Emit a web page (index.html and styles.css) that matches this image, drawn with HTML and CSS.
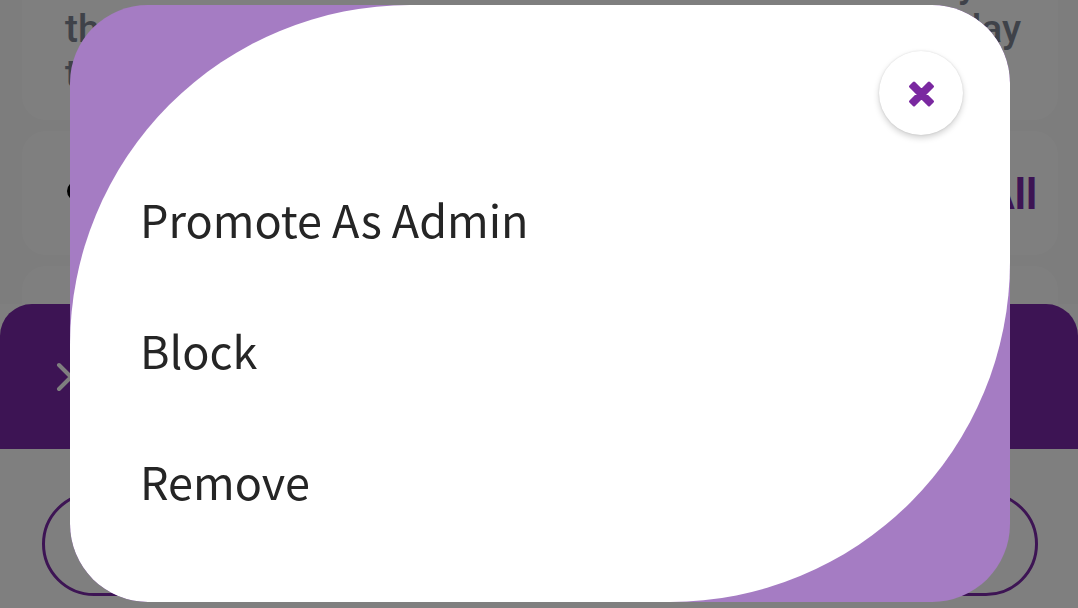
FILE: index.html
```html
<!DOCTYPE html>
<html lang="en">
<head>
<meta charset="utf-8">
<meta name="viewport" content="width=device-width, initial-scale=1">
<title>Member options</title>
<link rel="stylesheet" href="styles.css">
</head>
<body>
<main class="page">
  <div class="cards">
    <section class="card message">
      <p class="line line-short"><span></span><span>y</span></p>
      <p class="line"><span>th</span><span>day</span></p>
      <p class="line"><span>t</span></p>
    </section>
    <section class="card toolbar">
      <svg class="dot" viewBox="0 0 20 20" aria-hidden="true"><circle cx="10" cy="6" r="10"/></svg>
      <a class="all" href="#">All</a>
    </section>
    <section class="card next"></section>
  </div>
  <section class="sheet">
    <header class="sheet-bar">
      <button class="sheet-close" type="button" aria-label="Close sheet">
        <svg viewBox="0 0 30 30" aria-hidden="true"><path d="M4 3 28 27M28 3 4 27"/></svg>
      </button>
    </header>
    <div class="sheet-body">
      <button class="outline" type="button" aria-label="Continue"></button>
    </div>
  </section>
</main>
<div class="overlay">
  <div class="dialog" role="dialog" aria-modal="true" aria-label="Member options">
    <div class="panel">
      <header class="dialog-head">
        <button class="close" type="button" aria-label="Close">
          <svg viewBox="0 0 26 26" aria-hidden="true"><path d="M6 3 13.500 10.500 21 3 24.500 6.500 17 14 24.500 21.500 21 25 13.500 17.500 6 25 2.500 21.500 10 14 2.500 6.500Z"/></svg>
        </button>
      </header>
      <div class="menu">
        <button class="item" type="button">Promote As Admin</button>
        <button class="item" type="button">Block</button>
        <button class="item" type="button">Remove</button>
      </div>
    </div>
  </div>
</div>
</body>
</html>
```
FILE: styles.css
```css
* {
  box-sizing: border-box;
}

body {
  margin: 0;
  overflow: hidden;
  background: #fafafa;
  font-family: Roboto, "Liberation Sans", sans-serif;
}

button {
  margin: 0;
  padding: 0;
  border: 0;
  background: none;
  font: inherit;
  color: inherit;
  cursor: pointer;
}

.page {
  display: flex;
  flex-direction: column;
  height: 100vh;
}

.cards {
  display: flex;
  flex-direction: column;
  gap: 11px;
  margin-top: -40px;
  padding: 0 20px 0 22px;
}

.card {
  border-radius: 24px;
  background: #ffffff;
}

.message {
  padding: 2px 37px 23px 43px;
  color: #7e8592;
  font-size: 39px;
  font-weight: 500;
  line-height: 45px;
}

.line {
  display: flex;
  justify-content: space-between;
  margin: 0;
}

.line-short {
  padding-right: 44px;
}

.toolbar {
  display: flex;
  align-items: center;
  justify-content: space-between;
  height: 124px;
  padding: 3px 21px 0 45px;
}

.dot {
  overflow: visible;
  width: 20px;
  height: 20px;
  fill: #000000;
}

.all {
  color: #7a28a8;
  font-size: 42px;
  font-weight: 700;
  text-decoration: none;
}

.next {
  height: 38px;
  border-radius: 24px 24px 0 0;
}

.sheet {
  flex: 1;
  background: #ffffff;
}

.sheet-bar {
  display: flex;
  align-items: center;
  height: 145px;
  padding: 0 55px;
  border-radius: 32px 32px 0 0;
  background: #7a28a8;
}

.sheet-close,
.sheet-close svg {
  display: block;
  width: 30px;
  height: 30px;
}

.sheet-close path {
  fill: none;
  stroke: #ffffff;
  stroke-width: 4;
  stroke-linecap: round;
}

.sheet-body {
  padding: 43px 40px 12px 42px;
}

.outline {
  display: block;
  width: 100%;
  height: 104px;
  border: 3px solid #7a28a8;
  border-radius: 52px;
}

.overlay {
  position: fixed;
  inset: 0;
  display: grid;
  padding: 5px 68px 6px 70px;
  background: rgba(0, 0, 0, 0.5);
}

.dialog {
  display: grid;
  overflow: hidden;
  border-radius: 78px;
  background: #a57cc3;
}

.panel {
  border-radius: 340px 78px;
  background: #ffffff;
}

.dialog-head {
  display: flex;
  justify-content: flex-end;
  padding: 46px 47px 18px;
}

.close {
  display: grid;
  place-items: center;
  width: 84px;
  height: 84px;
  border-radius: 50%;
  background: #ffffff;
  box-shadow: 0 3px 6px rgba(0, 0, 0, 0.18), 0 0 2px rgba(0, 0, 0, 0.12);
}

.close svg {
  overflow: visible;
  width: 26px;
  height: 26px;
  fill: #7a28a0;
  stroke: #7a28a0;
  stroke-width: 3;
  stroke-linejoin: round;
}

.menu {
  display: flex;
  flex-direction: column;
}

.item {
  padding: 32px 70px;
  color: #252525;
  font-family: "Noto Sans CJK SC", "Noto Sans", sans-serif;
  font-size: 45px;
  line-height: 67px;
  text-align: left;
}
```
